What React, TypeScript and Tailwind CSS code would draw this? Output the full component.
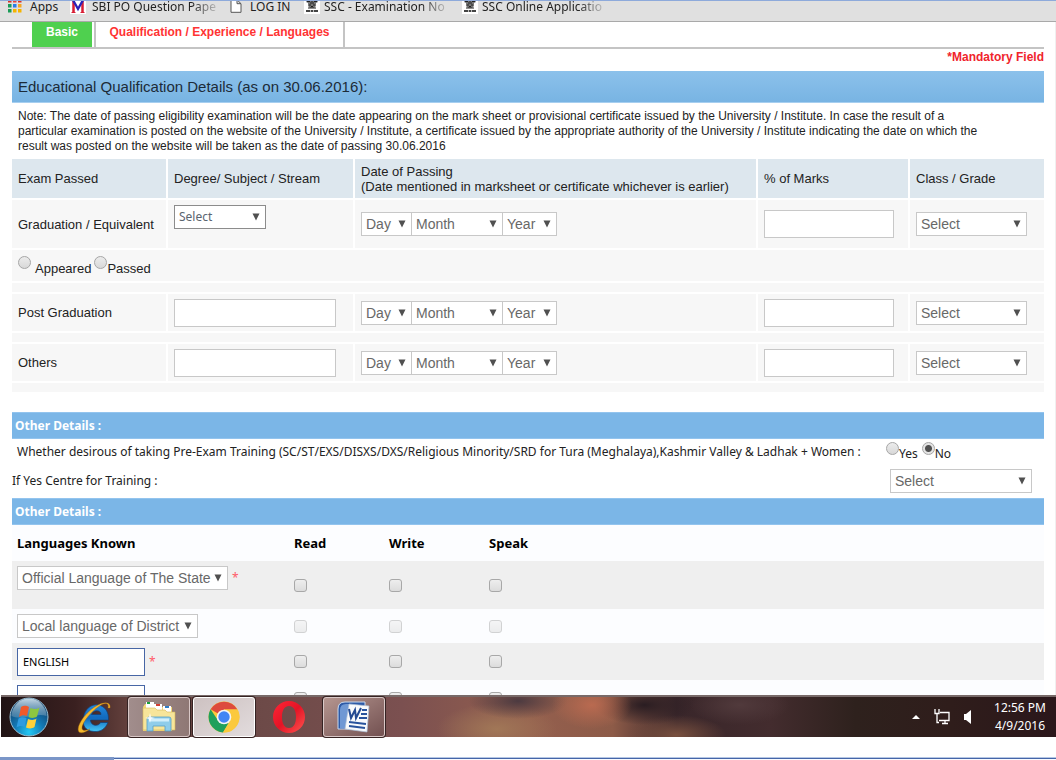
import type { ReactNode } from "react";

const arial = "font-['Liberation_Sans',Arial,sans-serif]";
const tahoma = "font-['Noto_Sans',Tahoma,sans-serif]";

function Dropdown({ label, text, className = "", tone = "border-[#c8c8c8] text-[#686868] text-sm pl-1 font-['Liberation_Sans',Arial,sans-serif]" }: {
  label: string;
  text: string;
  className?: string;
  tone?: string;
}) {
  return (
    <span className={`relative inline-block align-middle ${className}`}>
      <select aria-label={label} className={`block h-6 w-full appearance-none border bg-white pr-4 outline-none ${tone}`}>
        <option>{text}</option>
      </select>
      <svg viewBox="0 0 8 8" className="pointer-events-none absolute right-1.5 top-2 size-2">
        <path d="M.5.5h7L4 7.5z" fill="#505050" />
      </svg>
    </span>
  );
}

function TextBox({ label, className }: { label: string; className: string }) {
  return <input type="text" aria-label={label} className={`block h-7 border border-[#c8c8c8] bg-white px-1.5 outline-none ${className}`} />;
}

function Radio({ name, label, checked = false, gap = "" }: { name: string; label: string; checked?: boolean; gap?: string }) {
  return (
    <label className={`flex items-end ${gap}`}>
      <input
        type="radio"
        name={name}
        defaultChecked={checked}
        className="mb-[7px] size-[13px] appearance-none rounded-full border border-[#a6a6a6] bg-linear-to-b from-[#ececec] to-[#d8d8d8] checked:bg-[radial-gradient(circle,#505050_0_3px,#e4e4e4_4px)]"
      />
      <span>{label}</span>
    </label>
  );
}

function Tick({ label, disabled = false }: { label: string; disabled?: boolean }) {
  return (
    <input
      type="checkbox"
      aria-label={label}
      disabled={disabled}
      className="block size-[13px] appearance-none rounded-[3px] border border-[#a8a8a8] bg-linear-to-b from-[#eeeeee] to-[#dcdcdc] disabled:opacity-50"
    />
  );
}

function DateOfPassing({ exam }: { exam: string }) {
  return (
    <div className="flex">
      <Dropdown label={`${exam} day`} text="Day" className="w-[51px]" />
      <Dropdown label={`${exam} month`} text="Month" className="-ml-px w-[92px]" />
      <Dropdown label={`${exam} year`} text="Year" className="-ml-px w-[55px]" />
    </div>
  );
}

const cell = "border-b-2 border-r-2 border-white px-1.5 last:border-r-0";

function ExamRow({ exam, height, degree }: { exam: string; height: string; degree: ReactNode }) {
  return (
    <tr className={`bg-[#f7f7f7] ${height}`}>
      <td className={cell}>{exam}</td>
      <td className={cell}>{degree}</td>
      <td className={cell}><DateOfPassing exam={exam} /></td>
      <td className={cell}><TextBox label={`${exam} marks`} className="w-[130px]" /></td>
      <td className={cell}><Dropdown label={`${exam} class`} text="Select" className="w-[111px]" /></td>
    </tr>
  );
}

function Strip() {
  return (
    <tr className="h-[11px] bg-[#f7f7f7]">
      <td colSpan={5} className="border-b-2 border-white p-0" />
    </tr>
  );
}

function SectionBar() {
  return (
    <h2 className={`border-y border-[#93c4ee] bg-[#7bb6e7] px-[3px] text-xs/[25px] font-bold text-white ${tahoma}`}>Other Details :</h2>
  );
}

function Emblem() {
  return (
    <svg viewBox="0 0 16 16" className="size-4 shrink-0">
      <path fill="#fff" d="M0 0h16v16H0z" />
      <path d="M3 2h3l2-1 2 1h3l1 2-2 1v3l-2 2H6L4 8V5L2 4z" fill="#777" />
      <path d="M3 3.5h3M10 3.5h3M7 3h2M6 5h4M5 7h2M9 7h2M4 10h8M7 8.5h2" stroke="#222" strokeWidth="1" />
      <path d="M2 12h12v2H2z" fill="#444" />
      <path d="M6.5 12v2M9.5 12v2" stroke="#bbb" />
    </svg>
  );
}

function Bookmark({ icon, text, className = "", fade = false }: { icon: ReactNode; text: string; className?: string; fade?: boolean }) {
  return (
    <a href="#" className={`flex shrink-0 items-center ${className}`}>
      {icon}
      <span className={`whitespace-nowrap ${fade ? "[mask-image:linear-gradient(to_right,#000_80%,#0003)]" : ""}`}>{text}</span>
    </a>
  );
}

function BookmarksBar() {
  const dots = ["#d93025", "#e8453c", "#d93025", "#1a9b57", "#2b7de9", "#f5a623", "#1a9b57", "#f5b400", "#f5b400"];
  return (
    <nav className={`flex h-[22px] shrink-0 items-start overflow-hidden border-b border-t border-b-[#a9a9a9] border-t-[#8eaadb] bg-[#e0e0e0] pl-2 text-xs/[15px] text-[#222] ${tahoma}`}>
      <div className="-mt-[3px] flex">
        <Bookmark
          className="w-[62px] gap-2"
          text="Apps"
          icon={
            <svg viewBox="0 0 14 14" className="size-[14px] shrink-0">
              {dots.map((c, i) => <rect key={i} x={(i % 3) * 5} y={Math.floor(i / 3) * 5} width="3.5" height="3.5" fill={c} />)}
            </svg>
          }
        />
        <Bookmark
          fade
          className="w-[146px] gap-1.5"
          text="SBI PO Question Pape"
          icon={
            <svg viewBox="0 0 16 16" className="size-4 shrink-0">
              <path fill="#fff" d="M0 0h16v16H0z" />
              <path d="M3.5 15V2M12.5 2v13" stroke="#d81e35" strokeWidth="2.5" />
              <path d="M1.5 14.5h4M10.5 14.5h4" stroke="#d81e35" />
              <path d="m3 2 5 9 5-9" fill="none" stroke="#2a21b8" strokeWidth="2.3" />
            </svg>
          }
        />
        <Bookmark
          className="ml-3.5 w-[74px] gap-2"
          text="LOG IN"
          icon={
            <svg viewBox="0 0 12 14" className="h-[14px] w-3 shrink-0">
              <path d="M1 .7h6l4 4v8.6H1zM7 .7v4h4" fill="#fff" stroke="#555" />
            </svg>
          }
        />
        <Bookmark fade className="w-[142px] gap-1" text="SSC - Examination No" icon={<Emblem />} />
        <Bookmark fade className="ml-4 w-[142px] gap-1" text="SSC Online Applicatio" icon={<Emblem />} />
      </div>
    </nav>
  );
}

function Windows() {
  return (
    <svg viewBox="0 0 40 40" className="size-10">
      <defs>
        <radialGradient id="orb" cx="50%" cy="90%" r="85%">
          <stop offset="0" stopColor="#22c8f4" />
          <stop offset=".45" stopColor="#1378b4" />
          <stop offset="1" stopColor="#123a62" />
        </radialGradient>
        <linearGradient id="gloss" x1="0" y1="0" x2="0" y2="1">
          <stop offset="0" stopColor="#d8eaf4" stopOpacity=".9" />
          <stop offset="1" stopColor="#7ba6c2" stopOpacity=".4" />
        </linearGradient>
      </defs>
      <circle cx="20" cy="20" r="19" fill="url(#orb)" stroke="#9bc2d6" />
      <path d="M2.5 19a17.5 17.5 0 0 1 35 0C28 15 13 24 2.500 19z" fill="url(#gloss)" />
      <path d="M12 10c3-2 6-1 8 0l-2 9c-3-1-5-1-8 1z" fill="#f1592a" />
      <path d="M21.500 11c3 1.500 6 1.500 9-.5l-2.500 9c-3 2-6 1.500-8.500.5z" fill="#8dc63f" />
      <path d="M9.500 21.500c3-2 5.500-1.500 8-.5l-2 9c-3-1.500-5-1.500-8 .5z" fill="#2e9be0" />
      <path d="M19 22c3 1 5.500 1.500 8.500-.5l-2 8.500c-3 2-5.500 1.500-8.500.5z" fill="#ffd13b" />
    </svg>
  );
}

function Folder() {
  return (
    <svg viewBox="0 0 36 34" className="h-[34px] w-9">
      <path d="M4 4h9l2 3h16v24H2V7z" fill="#f2d978" />
      <path d="M5 2h8v6H5zM13 4h8v6h-8zM22 6h8v6h-8z" fill="#fff" />
      <path d="M6 2h3v2H6z" fill="#18a13c" /><path d="M15 4h4v2h-4z" fill="#d33d31" /><path d="M24 6h4v2h-4z" fill="#2d7dc7" />
      <path d="M2 8h12l2 2h8l2 2h8v18H2z" fill="#f7e59a" stroke="#d6b654" strokeWidth=".6" />
      <path d="M6 31V19q0-2 2-2h20q2 0 2 2v12h-6v-5H12v5z" fill="#8fcdea" stroke="#579fc4" strokeWidth=".8" />
      <path d="M8 18.500h20v3H8z" fill="#d2effb" />
      <path d="m9 13 1 4 4 1-4 1-1 4-1-4-4-1 4-1z" fill="#fff" opacity=".85" />
    </svg>
  );
}

function Chrome() {
  return (
    <svg viewBox="0 0 32 32" className="size-8">
      <circle cx="16" cy="16" r="15.500" fill="#fbc93d" />
      <path d="M16 16 2.600 8.300A15.500 15.500 0 0 1 29.400 8.500H16z" fill="#dd4b3e" />
      <path d="M2.600 8.300A15.500 15.500 0 0 0 15 31.500l7-12L16 16l-6 3.500z" fill="#1fa05c" />
      <path d="M16 8.500h13.400a15.500 15.500 0 0 1-14.400 23l7.500-12z" fill="#fbc93d" />
      <circle cx="16" cy="16" r="7.300" fill="#f5f5f5" />
      <circle cx="16" cy="16" r="5.700" fill="#4285f4" />
    </svg>
  );
}

function InternetExplorer() {
  return (
    <svg viewBox="0 0 36 34" className="h-[34px] w-9">
      <defs>
        <linearGradient id="ie" x1="0" y1="0" x2="0" y2="1">
          <stop offset="0" stopColor="#2187dc" />
          <stop offset=".5" stopColor="#1269bd" />
          <stop offset="1" stopColor="#45c6f5" />
        </linearGradient>
      </defs>
      <path d="M32.500 20H14.500c0 6 8 7 10 2.500h7.500C29 29.500 24 32 18 31.500 9 31 6 25 7.500 17.500 9 9 15 4 22 5s11 7 10.500 15zM15.500 14.500h9.500c0-5-8-5-9.500 0z" fill="url(#ie)" stroke="#123d75" strokeWidth=".7" />
      <path d="M34 8C35 3 30 1 22 5 10 11-1 27 3 32c2 2 7 0 11-3-5 2-8 2-8-1C6 22 18 8 27 4c4-1.500 6 0 5 4z" fill="#f6b92b" stroke="#a9690d" strokeWidth=".4" />
    </svg>
  );
}

function Opera() {
  return (
    <svg viewBox="0 0 32 32" className="size-8">
      <defs>
        <linearGradient id="op" x1="0" y1="0" x2="1" y2="1">
          <stop offset="0" stopColor="#ff2636" />
          <stop offset=".5" stopColor="#e41426" />
          <stop offset="1" stopColor="#ff5550" />
        </linearGradient>
      </defs>
      <path fillRule="evenodd" d="M16 0a16 16 0 1 0 0 32 16 16 0 0 0 0-32zm0 5c5 0 7 5 7 11s-2 11-7 11-7-5-7-11 2-11 7-11z" fill="url(#op)" />
    </svg>
  );
}

function Word() {
  return (
    <svg viewBox="0 0 34 34" className="size-[34px]">
      <path d="M1 29V9q0-7 7-7h20v27z" fill="#2d5aa7" stroke="#c7d9f0" />
      <path d="M3 28V10q0-6 6-6h3v24z" fill="#6f98d4" />
      <path d="m12 4 20 2-2 26-22-3z" fill="#f8fafc" stroke="#aebfd6" strokeWidth=".7" />
      <path d="m12 9 2 9 4-8 1 8 5-10" fill="none" stroke="#234a92" strokeWidth="2" />
      <path d="M25 10h5M24 14h6M22 18h8M12 22l17 2M12 26l16 2" stroke="#28539c" strokeWidth="1.800" />
    </svg>
  );
}

function TaskButton({ label, tone = "", children }: { label: string; tone?: string; children: ReactNode }) {
  return (
    <button type="button" aria-label={label} className={`flex h-10 w-[62px] items-center justify-center rounded-[3px] ${tone}`}>
      {children}
    </button>
  );
}

function Taskbar() {
  return (
    <footer className={`ml-px flex h-[42px] shrink-0 items-center border-t-2 border-t-[#786a69] bg-[radial-gradient(ellipse_40px_24px_at_56%_20%,#b96a50,transparent),radial-gradient(ellipse_50px_18px_at_49%_10%,#4c3a40,transparent),radial-gradient(ellipse_60px_26px_at_47%_80%,#a17757,transparent),radial-gradient(ellipse_50px_20px_at_61%_20%,#2a1d22,transparent),radial-gradient(ellipse_50px_20px_at_64%_95%,#79503f,transparent),radial-gradient(ellipse_50px_20px_at_70%_20%,#513a3c,transparent),linear-gradient(to_right,#201314,#3a2020_7%,#63403c_12%,#6d4a48_25%,#7b5050_38%,#945f4e_50%,#8d5b48_58%,#39262a_64%,#432c2e_73%,#2e211d_81%,#2f1d1b_90%,#2b171b)] ${tahoma}`}>
      <button type="button" aria-label="Start" className="ml-2"><Windows /></button>
      <div className="ml-3.5 flex flex-1 gap-[3px]">
        <TaskButton label="Internet Explorer"><InternetExplorer /></TaskButton>
        <TaskButton label="Windows Explorer" tone="border border-[#d9c8c7] bg-linear-to-r from-[#a18d8c] to-[#8f7875] shadow-[0_0_0_1px_#352323]"><Folder /></TaskButton>
        <TaskButton label="Google Chrome" tone="border border-white bg-linear-to-br from-[#cdc1c1] to-[#e2dcdd] shadow-[0_0_0_1px_#352323]"><Chrome /></TaskButton>
        <TaskButton label="Opera"><Opera /></TaskButton>
        <TaskButton label="Microsoft Word" tone="border border-[#d9c8c7] bg-linear-to-br from-[#b59690] to-[#735151] shadow-[0_0_0_1px_#352323]"><Word /></TaskButton>
      </div>
      <div className="flex items-center gap-3.5 pr-2.5">
        <svg viewBox="0 0 8 4" className="h-1 w-2"><path d="M4 0l4 4H0z" fill="#fff" /></svg>
        <svg viewBox="0 0 16 16" className="size-4">
          <path d="M6 3.500h9v8H5M8 14.500h6M11 12v2M1 1.500v3h4v-3M3 4.500v9h2M1 0v2M5 0v2" fill="none" stroke="#fff" strokeWidth="1.300" />
        </svg>
        <svg viewBox="0 0 8 14" className="h-[14px] w-2"><path d="M0 4h2l5-4v14l-5-4H0z" fill="#fff" /></svg>
        <div className="ml-2 text-center text-xs/[18px] text-white"><p>12:56 PM</p><p>4/9/2016</p></div>
      </div>
    </footer>
  );
}

function Languages() {
  const field = "block h-7 w-32 border border-[#4766a5] bg-white px-[5px] text-[11px] text-black outline-none";
  const star = <span className="text-xs text-[#ff5a68]">*</span>;
  const rows = [
    { id: "Official language", height: "h-12 bg-[#efefef]", off: false, node: <><Dropdown label="Official language" text="Official Language of The State" className="w-[211px]" />{star}</>, pad: "pb-3.5" },
    { id: "Local language", height: "h-[34px] bg-[#fcfdff]", off: true, node: <Dropdown label="Local language" text="Local language of District" className="w-[181px]" />, pad: "" },
    { id: "English", height: "h-[37px] bg-[#efefef]", off: false, node: <><input aria-label="English" defaultValue="ENGLISH" className={field} />{star}</>, pad: "" },
    { id: "Hindi", height: "h-[37px] bg-[#fcfdff]", off: false, node: <input aria-label="Hindi" className={field} />, pad: "" },
  ];
  return (
    <table className={`w-full table-fixed border-collapse text-left ${tahoma}`}>
      <colgroup><col className="w-[277px]" /><col className="w-[95px]" /><col className="w-[100px]" /><col /></colgroup>
      <thead>
        <tr className="h-9 bg-[#fcfdff] text-[13px] text-black">
          <th className="px-[5px]">Languages Known</th><th className="px-[5px]">Read</th><th className="px-[5px]">Write</th><th className="px-[5px]">Speak</th>
        </tr>
      </thead>
      <tbody>
        {rows.map((r) => (
          <tr key={r.id} className={r.height}>
            <td className={`px-[5px] py-0 ${r.pad}`}><div className="flex items-center gap-1">{r.node}</div></td>
            {["read", "write", "speak"].map((k) => (
              <td key={k} className="px-[5px] py-0"><Tick label={`${r.id} ${k}`} disabled={r.off} /></td>
            ))}
          </tr>
        ))}
      </tbody>
    </table>
  );
}

export default function App() {
  return (
    <div className={`flex h-screen flex-col overflow-hidden bg-white text-[13px]/[15px] text-[#222] ${arial}`}>
      <BookmarksBar />
      <main className="min-h-0 flex-1 overflow-hidden border-r border-[#f0f0f0] pl-3 pr-[11px]">
        <div className="flex h-[27px] gap-0.5 border-b-2 border-[#c4c4c4] pl-5 text-xs/[21px] font-bold">
          <button type="button" className="flex w-[60px] justify-center bg-[#4fd04f] text-white">Basic</button>
          <button type="button" className="flex w-[251px] justify-center border-x-2 border-[#c4c4c4] text-[#f33]">Qualification / Experience / Languages</button>
        </div>
        <p className="pb-[6px] pt-px text-right text-xs/[15px] font-bold text-[#f0242c]">*Mandatory Field</p>
        <h1 className="border-b border-[#a7cff0] bg-linear-to-b from-[#8cc1eb] to-[#78b4e3] px-1.5 text-[15px]/[31px] text-[#1c2b38]">Educational Qualification Details (as on 30.06.2016):</h1>
        <p className="px-1.5 pb-[5px] pt-1.5 text-xs/[15px]">
          Note: The date of passing eligibility examination will be the date appearing on the mark sheet or provisional certificate issued by the University / Institute. In case the result of a
          <br />
          particular examination is posted on the website of the University / Institute, a certificate issued by the appropriate authority of the University / Institute indicating the date on which the
          <br />
          result was posted on the website will be taken as the date of passing 30.06.2016
        </p>
        <table className="w-full table-fixed border-separate border-spacing-0 text-left">
          <colgroup><col className="w-[156px]" /><col className="w-[187px]" /><col /><col className="w-[152px]" /><col className="w-[134px]" /></colgroup>
          <thead>
            <tr className="h-[41px] bg-[#dde7ee] [&>th]:font-normal">
              <th className={cell}>Exam Passed</th>
              <th className={cell}>Degree/ Subject / Stream</th>
              <th className={cell}>Date of Passing<br />(Date mentioned in marksheet or certificate whichever is earlier)</th>
              <th className={cell}>% of Marks</th>
              <th className={cell}>Class / Grade</th>
            </tr>
          </thead>
          <tbody>
            <ExamRow exam="Graduation / Equivalent" height="h-[50px]" degree={<div className="pb-3.5"><Dropdown label="Degree" text="Select" className="w-[92px]" tone={`border-[#8c8c8c] text-[#5a6470] text-xs pl-1 ${tahoma}`} /></div>} />
            <tr className="h-[33px] bg-[#f7f7f7]">
              <td colSpan={5} className="border-b-2 border-white px-1.5"><div className="flex gap-[3px]"><Radio name="grad" label="Appeared" gap="gap-1" /><Radio name="grad" label="Passed" /></div></td>
            </tr>
            <Strip />
            <ExamRow exam="Post Graduation" height="h-[39px]" degree={<TextBox label="Post graduation degree" className="w-[162px]" />} />
            <Strip />
            <ExamRow exam="Others" height="h-[39px]" degree={<TextBox label="Other degree" className="w-[162px]" />} />
            <Strip />
          </tbody>
        </table>
        <div className="h-[18px]" />
        <SectionBar />
        <div className={`flex h-[27px] items-center justify-between pb-0.5 pl-[5px] ${tahoma}`}>
          <p className="whitespace-nowrap text-xs">Whether desirous of taking Pre-Exam Training (SC/ST/EXS/DISXS/DXS/Religious Minority/SRD for Tura (Meghalaya),Kashmir Valley &amp; Ladhak + Women :</p>
          <div className="flex w-[158px] gap-1 text-xs"><Radio name="training" label="Yes" /><Radio name="training" label="No" checked /></div>
        </div>
        <div className="flex h-8 items-center justify-between pb-0.5 pr-3">
          <p className={`text-xs ${tahoma}`}>If Yes Centre for Training :</p>
          <Dropdown label="Centre for training" text="Select" className="w-[142px]" />
        </div>
        <SectionBar />
        <Languages />
      </main>
      <Taskbar />
      <div className="flex h-[23px] shrink-0 items-end">
        <div className="h-[3px] w-[114px] bg-[#7a96c8]" />
        <div className="h-[3px] flex-1 border-t border-[#b5c7e4] bg-[#f8faff]"><div className="h-px bg-[#4565a8]" /></div>
      </div>
    </div>
  );
}
